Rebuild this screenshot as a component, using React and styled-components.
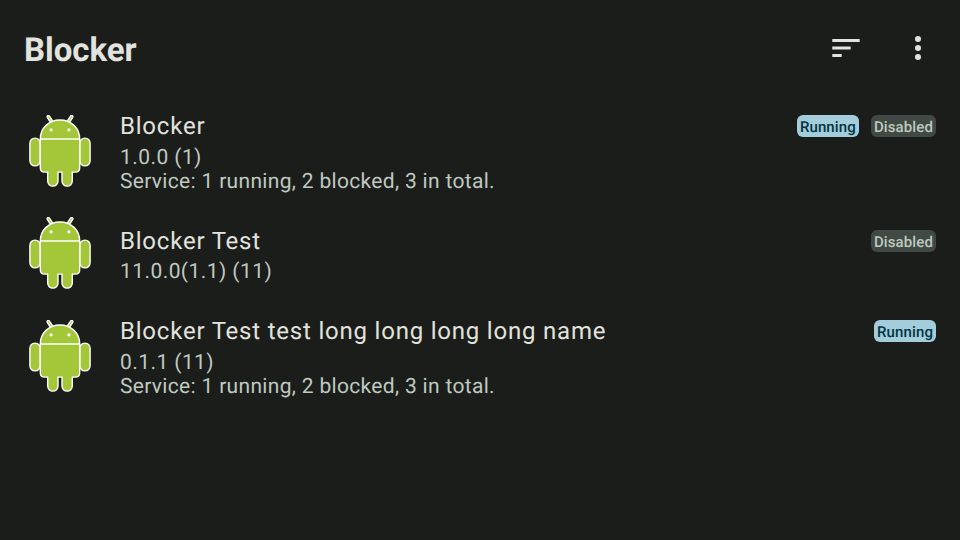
import React from "react";
import styled, { createGlobalStyle } from "styled-components";

const GlobalStyle = createGlobalStyle`
  * { box-sizing: border-box; }
  body { margin: 0; background: #1b1d1a; }
`;

const Screen = styled.main`
  height: 540px;
  display: flex;
  flex-direction: column;
  overflow: hidden;
  background: #1b1d1a;
  border-bottom: 1px solid #1c1a1c;
  font-family: Roboto, sans-serif;
  text-rendering: geometricPrecision;
  color: #e1e3de;
`;

const TopBar = styled.header`
  height: 96px;
  flex: none;
  display: flex;
  align-items: center;
  justify-content: space-between;
  padding: 0 24px;
`;

const Heading = styled.h1`
  margin: 6px 0 0;
  font-size: 33px;
  line-height: 42px;
  font-weight: 700;
  letter-spacing: -0.05px;
`;

const Actions = styled.div`
  display: flex;
  gap: 36px;
`;

const IconButton = styled.button`
  width: 36px;
  height: 36px;
  padding: 0;
  border: 0;
  background: none;
  color: inherit;

  svg { display: block; }
`;

const List = styled.ul`
  margin: 0;
  padding: 3.5px 0 0;
  list-style: none;
`;

const Row = styled.li`
  height: 102.5px;
  display: flex;
  align-items: center;
  gap: 24px;
  padding: 0 24px;
`;

const AppIcon = styled.svg`
  width: 72px;
  height: 72px;
  flex: none;
`;

const Info = styled.div`
  flex: 1;
`;

const TitleLine = styled.div`
  height: 36px;
  display: flex;
  align-items: center;
  gap: 12px;
`;

const Name = styled.div`
  flex: 1;
  font-size: 24px;
  line-height: 36px;
  letter-spacing: 0.79px;
`;

const Details = styled.div`
  padding-top: 1.5px;
  margin-bottom: -0.5px;
  font-size: 21px;
  line-height: 24px;
  color: #bfc9c0;
`;

const Version = styled.div`
  letter-spacing: 0.43px;
`;

const Summary = styled.div`
  letter-spacing: 0.32px;
`;

const Badge = styled.span`
  height: 22px;
  padding: 0 3px;
  border-radius: 6px;
  font-size: 15px;
  font-weight: 500;
  line-height: 24px;
  letter-spacing: 0.12px;
  background: ${(p) => (p.$active ? "#a3cddb" : "#404943")};
  color: ${(p) => (p.$active ? "#023541" : "#bfc9c0")};
`;

const Robot = () => (
  <AppIcon viewBox="24 114.5 72 72" aria-hidden="true">
    <g fill="#a4c639" stroke="#fff" strokeWidth="1.4">
      <path d="M50.6 122 47.3 116.8A1.2 1.2 0 0 1 49.4 115.6L53 121Z" />
      <path d="M69.4 122 72.7 116.8A1.2 1.2 0 0 0 70.6 115.6L67 121Z" />
      <rect x="29.9" y="137.6" width="10.3" height="27.8" rx="5.1" />
      <rect x="79.8" y="137.6" width="10.3" height="27.8" rx="5.1" />
      <path d="M40.3 138.5C40.3 127.5 49 119.5 60 119.5S79.7 127.5 79.7 138.5V167.3Q79.7 171.6 75.4 171.6H72.3V180.5A5.1 5.1 0 0 1 62 180.5V171.6H58V180.5A5.1 5.1 0 0 1 47.7 180.5V171.6H44.6Q40.3 171.6 40.3 167.3Z" />
      <path d="M40.3 138.5H79.7" />
    </g>
    <g fill="#fff">
      <circle cx="51.1" cy="129.3" r="1.6" />
      <circle cx="68.9" cy="129.3" r="1.6" />
    </g>
  </AppIcon>
);

const apps = [
  {
    name: "Blocker",
    version: "1.0.0 (1)",
    summary: "Service: 1 running, 2 blocked, 3 in total.",
    badges: ["Running", "Disabled"],
  },
  { name: "Blocker Test", version: "11.0.0(1.1) (11)", badges: ["Disabled"] },
  {
    name: "Blocker Test test long long long long name",
    version: "0.1.1 (11)",
    summary: "Service: 1 running, 2 blocked, 3 in total.",
    badges: ["Running"],
  },
];

export default function App() {
  return (
    <Screen>
      <GlobalStyle />
      <TopBar>
        <Heading>Blocker</Heading>
        <Actions>
          <IconButton aria-label="Sort">
            <svg width="36" height="36" viewBox="0 0 36 36" fill="currentColor">
              <path d="M4.3 9H31.7V12H4.3ZM4.3 16.5H22.7V19.5H4.3ZM4.3 24H13.7V27H4.3Z" />
            </svg>
          </IconButton>
          <IconButton aria-label="More">
            <svg width="36" height="36" viewBox="0 0 36 36" fill="currentColor">
              <circle cx="18" cy="9" r="3" />
              <circle cx="18" cy="18" r="3" />
              <circle cx="18" cy="27" r="3" />
            </svg>
          </IconButton>
        </Actions>
      </TopBar>
      <List>
        {apps.map((app) => (
          <Row key={app.name}>
            <Robot />
            <Info>
              <TitleLine>
                <Name>{app.name}</Name>
                {app.badges.map((label) => (
                  <Badge key={label} $active={label === "Running"}>{label}</Badge>
                ))}
              </TitleLine>
              <Details>
                <Version>{app.version}</Version>
                {app.summary && <Summary>{app.summary}</Summary>}
              </Details>
            </Info>
          </Row>
        ))}
      </List>
    </Screen>
  );
}
